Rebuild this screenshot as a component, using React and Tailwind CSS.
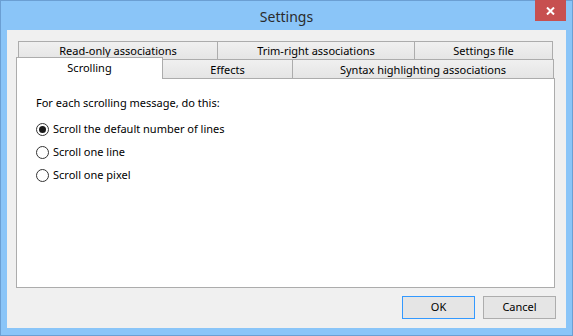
import React from "react"

const font = "font-['Noto_Sans',sans-serif]"

const topTabs = [
  { label: "Read-only associations", w: "w-[200px]" },
  { label: "Trim-right associations", w: "w-[198px]" },
  { label: "Settings file", w: "w-[139px]" },
]

function Radio({ checked, label }) {
  return (
    <label className="flex items-center h-[23px] gap-[4px]">
      <span className="w-[13px] h-[13px] rounded-full border border-[#333333] bg-white flex items-center justify-center">
        {checked && <span className="w-[7px] h-[7px] rounded-full bg-[#1a1a1a]" />}
      </span>
      <span>{label}</span>
    </label>
  )
}

export default function App() {
  return (
    <div className={`w-[573px] h-[336px] border border-[#6b9fd3] bg-[#8ac5f8] flex flex-col ${font} text-[11px] text-black`}>
      {/* Title bar */}
      <div className="h-[29px] grid grid-cols-[1fr_auto_1fr]">
        <div />
        <div className="text-[14px] text-[#2b2b2b] leading-[29px] pt-[1px]">Settings</div>
        <div className="flex justify-end">
          <button className="-mt-px mr-[6px] w-[31px] h-[21px] bg-[#c75050] flex items-center justify-center">
            <svg width="9" height="8" viewBox="0 0 9 8">
              <path d="M1 0.5 L8 7.5 M8 0.5 L1 7.5" stroke="white" strokeWidth="2" />
            </svg>
          </button>
        </div>
      </div>

      {/* Client area */}
      <div className="mx-[6px] mb-[7px] flex-1 bg-[#f0f0f0] flex flex-col pt-[11px] pl-[9px]">
        <div className="w-[539px] flex flex-col">
          {/* Row 1 tabs */}
          <div className="flex h-[18px] pl-[2px]">
            {topTabs.map((t, i) => (
              <div
                key={t.label}
                className={`${t.w} ${i > 0 ? "-ml-px" : ""} border border-b-0 border-[#acacac] bg-gradient-to-b from-[#f0f0f0] to-[#e5e5e5] flex justify-center leading-[17px]`}
              >
                {t.label}
              </div>
            ))}
          </div>
          {/* Row 2 tabs */}
          <div className="flex items-end h-[19px]">
            <div className="relative z-10 w-[147px] h-[22px] -mb-px border border-b-0 border-[#acacac] bg-white flex justify-center leading-[19px]">
              Scrolling
            </div>
            <div className="-ml-px w-[131px] h-[19px] border border-b-0 border-[#acacac] bg-gradient-to-b from-[#f0f0f0] to-[#e5e5e5] flex justify-center leading-[19px]">
              Effects
            </div>
            <div className="-ml-px w-[262px] h-[19px] border border-b-0 border-[#acacac] bg-gradient-to-b from-[#f0f0f0] to-[#e5e5e5] flex justify-center leading-[19px]">
              Syntax highlighting associations
            </div>
          </div>
          {/* Panel */}
          <div className="h-[210px] border border-[#acacac] bg-white pt-[16px] pl-[19px]">
            <div className="leading-[16px]">For each scrolling message, do this:</div>
            <div className="mt-[7px] flex flex-col">
              <Radio checked label="Scroll the default number of lines" />
              <Radio label="Scroll one line" />
              <Radio label="Scroll one pixel" />
            </div>
          </div>
        </div>

        {/* Buttons */}
        <div className="mt-[8px] mr-[10px] flex justify-end gap-[8px]">
          <button className="w-[73px] h-[23px] border border-[#3399ff] bg-[#e5e5e5]">OK</button>
          <button className="w-[73px] h-[23px] border border-[#adadad] bg-[#e5e5e5]">Cancel</button>
        </div>
      </div>
    </div>
  )
}
